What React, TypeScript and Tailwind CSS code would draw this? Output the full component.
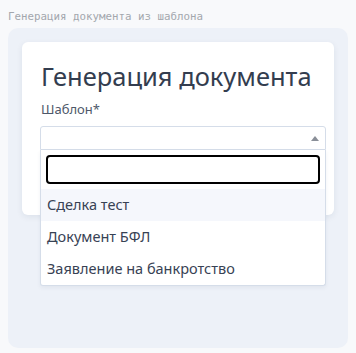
export default function App() {
  const options = ["Сделка тест", "Документ БФЛ", "Заявление на банкротство"]

  return (
    <div className="min-h-[353px] w-full bg-[#f8f9fb] px-2 pb-[5px] pt-[10px] font-['Noto_Sans',sans-serif]">
      <p className="font-['DejaVu_Sans_Mono',monospace] text-[10.8px] leading-[14px] text-[#a3a7ad]">
        Генерация документа из шаблона
      </p>

      <div className="mt-[4px] h-[320px] rounded-[10px] bg-[#edf1f8] px-[14px] pt-[14px]">
        <div className="relative h-[173px] rounded-[6px] bg-white pl-[18px] pr-[8px] pt-[18px] shadow-[0_2px_6px_rgba(30,45,80,0.08)]">
          <h1 className="whitespace-nowrap pl-px text-[25.5px] leading-[32px] text-[#333d4f]">Генерация документа</h1>
          <label className="mt-[8px] block pl-px text-[13px] leading-[18px] text-[#4e586a]">Шаблон*</label>

          <div className="mt-[8px] flex h-[24px] items-center justify-end rounded-t-[3px] border border-[#d5dde9] bg-white pr-[6px]">
            <span className="h-0 w-0 border-x-[4px] border-b-[5px] border-x-transparent border-b-[#8a8f98]" />
          </div>

          <div className="absolute left-[18px] right-[8px] top-[108px] z-10 rounded-b-[3px] border border-t-0 border-[#d5dde9] bg-white shadow-[0_2px_4px_rgba(30,45,80,0.06)]">
            <div className="px-[5px] pb-[5px] pt-[5px]">
              <input className="block h-[29px] w-full rounded-[4px] border-2 border-black bg-white outline-none" />
            </div>
            {options.map((o, i) => (
              <div
                key={o}
                className={`flex h-[32px] items-center px-[6px] text-[14.5px] text-[#384254] ${i === 0 ? "bg-[#f5f7fc]" : ""}`}
              >
                {o}
              </div>
            ))}
          </div>
        </div>
      </div>
    </div>
  )
}
